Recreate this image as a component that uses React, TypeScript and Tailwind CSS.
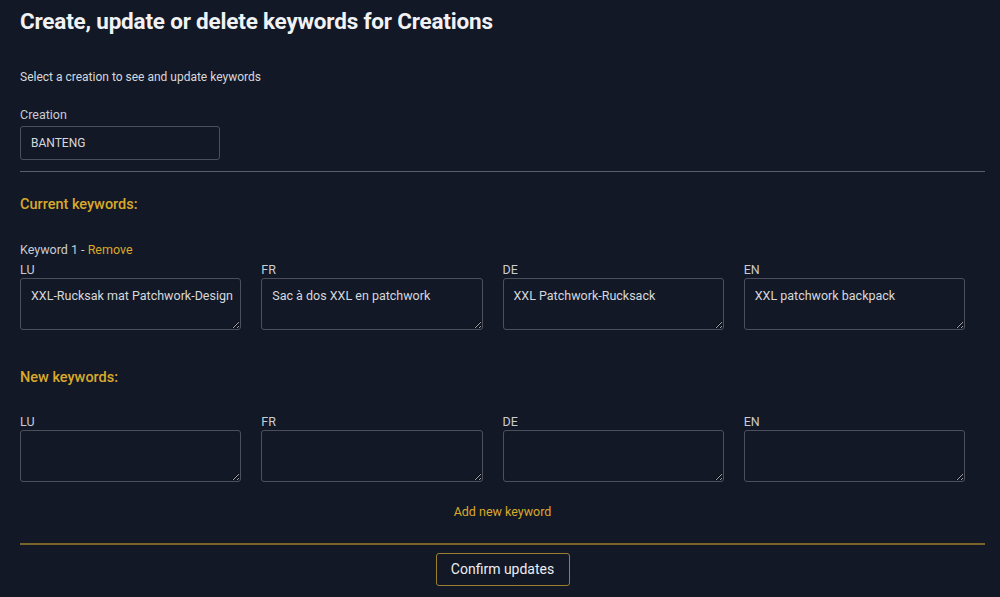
import React from "react";

const langs = ["LU", "FR", "DE", "EN"];

const current = [
  "XXL-Rucksak mat Patchwork-Design",
  "Sac à dos XXL en patchwork",
  "XXL Patchwork-Rucksack",
  "XXL patchwork backpack",
];

const KeywordRow = ({ values }: { values?: string[] }) => (
  <div className="grid grid-cols-4 gap-x-5 pr-5">
    {langs.map((lang, i) => (
      <div key={lang} className="flex flex-col">
        <label className="text-[12.5px] leading-[16px] text-[#c9ccd3]">{lang}</label>
        <textarea
          readOnly
          wrap="off"
          defaultValue={values ? values[i] : ""}
          className="mt-0 h-[52px] w-full overflow-hidden rounded-[3px] border border-[#4b505c] bg-[#131826] px-[10px] pt-[9px] text-[12.5px] leading-[16px] whitespace-nowrap text-[#d6d8dd] outline-none"
        />
      </div>
    ))}
  </div>
);

export default function App() {
  return (
    <div className="h-[597px] overflow-hidden bg-[#131826] pt-[7px] pr-[15px] pl-5 font-['Roboto',sans-serif] text-[#d6d8dd]">
      <h1 className="text-[22.5px] leading-[28px] font-bold tracking-[-0.2px] text-[#f1f2f4]">
        Create, update or delete keywords for Creations
      </h1>
      <p className="mt-[34px] text-[12px] leading-[16px] text-[#d6d8dd]">
        Select a creation to see and update keywords
      </p>
      <div className="mt-[22px] text-[12.5px] leading-[16px] text-[#c9ccd3]">Creation</div>
      <div className="mt-[3px] flex h-[34px] w-[200px] items-center rounded-[3px] border border-[#4b505c] px-[10px] text-[12px] text-[#d6d8dd]">
        BANTENG
      </div>
      <div className="mt-[11px] h-px bg-[#5a5e68]" />

      <h2 className="mt-[24px] text-[14.5px] leading-[18px] font-medium text-[#d9a92b]">
        Current keywords:
      </h2>
      <div className="mt-[28px] text-[12.5px] leading-[16px] text-[#c9ccd3]">
        Keyword 1 - <span className="text-[#d9a92b]">Remove</span>
      </div>
      <div className="mt-[4px]">
        <KeywordRow values={current} />
      </div>

      <h2 className="mt-[39px] text-[14.5px] leading-[18px] font-medium text-[#d9a92b]">
        New keywords:
      </h2>
      <div className="mt-[27px]">
        <KeywordRow />
      </div>

      <div className="mt-[21px] text-center text-[12.5px] leading-[18px] text-[#d9a92b]">
        Add new keyword
      </div>
      <div className="mt-[22px] h-[2px] bg-[#7a6427]" />
      <div className="mt-[8px] flex justify-center">
        <button className="h-[33px] w-[134px] rounded-[3px] border border-[#9c7f30] text-[14px] text-[#eceef1]">
          Confirm updates
        </button>
      </div>
    </div>
  );
}
